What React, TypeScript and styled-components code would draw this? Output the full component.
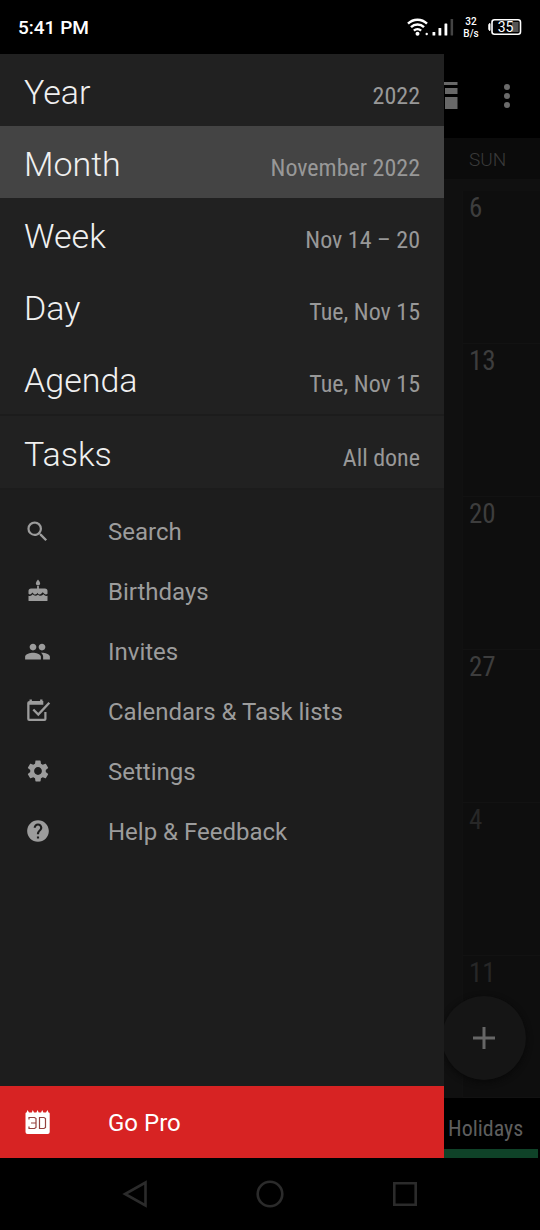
import React from "react";
import styled, { createGlobalStyle } from "styled-components";
import { MdSearch, MdGroup, MdSettings, MdHelp } from "react-icons/md";

const GlobalStyle = createGlobalStyle`
  *, *::before, *::after { box-sizing: border-box; }
  body {
    margin: 0;
    background: #000;
    font-family: Roboto, "Liberation Sans", sans-serif;
  }
  button {
    font: inherit;
    color: inherit;
    background: none;
    border: 0;
    padding: 0;
    cursor: pointer;
  }
`;

const condensed = `"Roboto Condensed", Roboto, "Liberation Sans", sans-serif`;

const Screen = styled.div`
  display: flex;
  flex-direction: column;
  min-height: 100vh;
`;

const StatusBar = styled.header`
  display: flex;
  align-items: center;
  justify-content: space-between;
  height: 54px;
  padding: 0 18px;
  color: #fff;
`;

const Clock = styled.time`
  padding-top: 2px;
  font-size: 19px;
  font-weight: 500;
  line-height: 24px;
`;

const StatusIcons = styled.div`
  display: flex;
  align-items: center;
`;

const NetSpeed = styled.div`
  display: flex;
  flex-direction: column;
  align-items: center;
  width: 18px;
  margin: 0 8px 0 7px;
  padding-top: 1px;
  font-size: 10px;
  font-weight: 500;
  line-height: 12px;
`;

const Main = styled.div`
  display: flex;
  flex: 1;
`;

const Drawer = styled.nav`
  display: flex;
  flex: 1;
  flex-direction: column;
  min-width: 0;
  background: #1d1d1d;
`;

const ViewGroup = styled.div`
  background: #212121;
  border-bottom: 2px solid #1c1c1c;
`;

const ViewRow = styled.button<{ $active?: boolean }>`
  display: flex;
  align-items: baseline;
  justify-content: space-between;
  width: 100%;
  height: 72px;
  padding: 0 24px;
  background: ${(p) => (p.$active ? "#444" : "transparent")};
`;

const ViewName = styled.span`
  color: #f0f0f0;
  font-size: 34px;
  font-weight: 300;
  line-height: 76px;
`;

const ViewDetail = styled.span`
  color: #989898;
  font-family: ${condensed};
  font-size: 24px;
  line-height: 28px;
`;

const ToolList = styled.div`
  flex: 1;
  padding: 11px 0;
`;

const ToolRow = styled.button<{ $accent?: boolean }>`
  display: flex;
  align-items: center;
  width: 100%;
  height: ${(p) => (p.$accent ? 72 : 60)}px;
  padding: 0 24px;
  background: ${(p) => (p.$accent ? "#d72323" : "transparent")};
  color: ${(p) => (p.$accent ? "#fff" : "#9c9c9c")};
  font-size: 24px;
  line-height: 28px;
`;

const ToolLabel = styled.span`
  padding-top: 2px;
`;

const IconSlot = styled.span`
  display: flex;
  justify-content: center;
  width: 27px;
  margin-right: 57px;
`;

const Backdrop = styled.main`
  position: relative;
  display: flex;
  flex: 0 0 96px;
  flex-direction: column;
  overflow: hidden;
  background: #0e0e0e;
`;

const Toolbar = styled.div`
  display: flex;
  align-items: center;
  justify-content: space-between;
  height: 84px;
  padding-right: 30px;
  background: #000;
`;

const IconButton = styled.button`
  display: flex;
`;

const Weekday = styled.div`
  height: 41px;
  padding-left: 25px;
  background: #0b0b0b;
  color: #3a3a3a;
  font-size: 19px;
  font-weight: 300;
  line-height: 43px;
`;

const Weeks = styled.div`
  display: flex;
  flex: 1;
  flex-direction: column;
  padding-top: 12px;
  background: #101010;
`;

const DayCell = styled.div<{ $outside?: boolean }>`
  flex: 0 0 153px;
  padding-left: 6px;
  margin-left: 18px;
  background: #0e0e0e;
  border-left: 1px solid #111;
  border-bottom: 1px solid #121212;
  color: ${(p) => (p.$outside ? "#272727" : "#3d3d3d")};
  font-family: ${condensed};
  font-size: 27px;
  line-height: 34px;

  &:last-child {
    flex: 1 0 auto;
  }
`;

const Fab = styled.button`
  position: absolute;
  right: 14px;
  bottom: 78px;
  display: flex;
  align-items: center;
  justify-content: center;
  width: 84px;
  height: 84px;
  border-radius: 50%;
  background: #151515;
  box-shadow: 0 2px 6px #080808;
`;

const TabStrip = styled.div`
  display: flex;
  flex-direction: column;
  background: #000;
`;

const CalendarTab = styled.button`
  height: 60px;
  margin-right: 2px;
  padding-left: 4px;
  border-bottom: 9px solid #0f4228;
  color: #5e5e5e;
  font-family: ${condensed};
  font-size: 22px;
  line-height: 28px;
  text-align: left;
`;

const TabLabel = styled.span`
  display: block;
  padding-top: 10px;
`;

const SystemBar = styled.footer`
  display: flex;
  justify-content: center;
  align-items: center;
  gap: 105px;
  height: 72px;
`;

const views = [
  { name: "Year", detail: "2022" },
  { name: "Month", detail: "November 2022", active: true },
  { name: "Week", detail: "Nov 14 – 20" },
  { name: "Day", detail: "Tue, Nov 15" },
  { name: "Agenda", detail: "Tue, Nov 15" },
];

const sundays = [
  { day: "6" },
  { day: "13" },
  { day: "20" },
  { day: "27" },
  { day: "4", outside: true },
  { day: "11", outside: true },
];

const SignalIcon = () => (
  <svg width="48" height="20" viewBox="0 0 48 20" fill="none" aria-hidden="true">
    <g stroke="#fff" strokeWidth="2.4">
      <path d="M1 6.6a13.5 13.5 0 0 1 19 0" />
      <path d="M4 10.2a9.2 9.2 0 0 1 13 0" />
      <path d="M6.9 13.6a5.2 5.2 0 0 1 7.2 0" />
    </g>
    <circle cx="10.5" cy="16.8" r="2" fill="#fff" />
    <circle cx="19.7" cy="17" r="1.2" fill="#fff" />
    <g fill="#fff">
      <rect x="25.5" y="15" width="2.8" height="3.5" rx=".6" />
      <rect x="31.5" y="11" width="2.8" height="7.5" rx=".6" />
      <rect x="37.5" y="6.5" width="2.8" height="12" rx=".6" />
    </g>
    <rect x="43.6" y="2" width="2.5" height="16.5" rx=".6" fill="#444" />
  </svg>
);

const BatteryIcon = () => (
  <svg width="34" height="18" viewBox="0 0 34 18" aria-label="Battery 35%">
    <path d="M2 5.5Q.8 5.5 .8 7v4Q.8 12.500 2 12.500z" fill="#fff" stroke="#fff" />
    <rect x="4" y="1.8" width="28.5" height="14.5" rx="2.5" fill="none" stroke="#fff" strokeWidth="1.6" />
    <rect x="24" y="4" width="6.500" height="10" fill="#555" />
    <text x="17.5" y="14" fill="#fff" fontSize="14" fontFamily="Roboto, sans-serif" textAnchor="middle">35</text>
  </svg>
);

const CakeIcon = () => (
  <svg width="26" height="26" viewBox="0 0 26 26" fill="currentColor" aria-hidden="true">
    <path d="M13 1.500c1.500 2 2.100 2.900 2.100 3.900a2.100 2.100 0 0 1-4.200 0c0-1 .6-1.900 2.100-3.900z" />
    <path d="M12.100 8h1.800v2.400h6q2.600 0 2.600 2.600v2.800q-1.600 1.400-3.200 0l-1.600-1.500-1.500 1.500q-1.600 1.300-3.200-.1L13 14.800l-1.500 1.300q-1.400 1-2.800-.2L7.600 14.600l-1.300 1.200q-1.400 1.300-2.800 0V13q0-2.600 2.600-2.600h6z" />
    <path d="M3.500 17.800q1.900.6 3.500-.8l.7-.7.8.7q2 1.500 4 .1l.5-.5.7.6q2 1.300 3.900-.1l.8-.8.8.8q1.500 1.200 3.300.700V22.500q0 .6-.7.6H4.200q-.7 0-.7-.6z" />
  </svg>
);

const CalendarCheckIcon = () => (
  <svg width="26" height="26" viewBox="0 0 26 26" fill="none" aria-hidden="true">
    <path d="M4.5 3V1.5h2.4V3h8.2V1.5h2.4V3h.8v3.8H4.5v14h14.8V14h2.2v7q0 2-2 2H4.2q-2 0-2-2V5q0-2 2.3-2z" fill="currentColor" />
    <path d="M8.3 11.5l5 5L24.3 4.8" stroke="currentColor" strokeWidth="2.4" />
  </svg>
);

const ProIcon = () => (
  <svg width="27" height="27" viewBox="0 0 27 27" fill="none" aria-hidden="true">
    <path d="M1.500 23V4.500Q1.500 3.500 2.500 3.500L3.500 1 5 3.500h2.800L8.800 1 10 3.500h2.400L13.500 1l1.200 2.500h2.400L18.200 1l1.200 2.500h2.600L23.500 1l1 2.500q1.200 0 1.200 1V23q0 2-2 2H3.500q-2 0-2-2z" fill="#fff" />
    <path d="M5 10.500V8.500h5.500l1.500 1v9l-1.500 1H5v-2M7 14h4.500M15.500 8.500h4.500l1.500 1v9l-1.500 1h-4.500z" stroke="#94403d" strokeWidth="1.200" />
  </svg>
);

const MonthViewIcon = () => (
  <svg width="14" height="29" viewBox="0 0 14 29" fill="#686868" aria-hidden="true">
    <path d="M0 0h13.5v3H0zM1 6h12.5v6H1zM1 15h12.5v12H1z" />
  </svg>
);

const MoreIcon = () => (
  <svg width="6" height="26" viewBox="0 0 6 26" fill="#6b6b6b" aria-hidden="true">
    <circle cx="3" cy="4" r="3" />
    <circle cx="3" cy="13" r="3" />
    <circle cx="3" cy="22" r="3" />
  </svg>
);

const tools = [
  { label: "Search", icon: <MdSearch size={27} /> },
  { label: "Birthdays", icon: <CakeIcon /> },
  { label: "Invites", icon: <MdGroup size={27} /> },
  { label: "Calendars & Task lists", icon: <CalendarCheckIcon /> },
  { label: "Settings", icon: <MdSettings size={26} /> },
  { label: "Help & Feedback", icon: <MdHelp size={26} /> },
];

export default function App() {
  return (
    <Screen>
      <GlobalStyle />
      <StatusBar>
        <Clock>5:41 PM</Clock>
        <StatusIcons>
          <SignalIcon />
          <NetSpeed>
            <span>32</span>
            <span>B/s</span>
          </NetSpeed>
          <BatteryIcon />
        </StatusIcons>
      </StatusBar>

      <Main>
        <Drawer>
          <ViewGroup>
            {views.map((v) => (
              <ViewRow key={v.name} $active={v.active}>
                <ViewName>{v.name}</ViewName>
                <ViewDetail>{v.detail}</ViewDetail>
              </ViewRow>
            ))}
          </ViewGroup>
          <ViewGroup>
            <ViewRow>
              <ViewName>Tasks</ViewName>
              <ViewDetail>All done</ViewDetail>
            </ViewRow>
          </ViewGroup>
          <ToolList>
            {tools.map((t) => (
              <ToolRow key={t.label}>
                <IconSlot>{t.icon}</IconSlot>
                <ToolLabel>{t.label}</ToolLabel>
              </ToolRow>
            ))}
          </ToolList>
          <ToolRow $accent>
            <IconSlot>
              <ProIcon />
            </IconSlot>
            <ToolLabel>Go Pro</ToolLabel>
          </ToolRow>
        </Drawer>

        <Backdrop>
          <Toolbar>
            <IconButton aria-label="Month layout">
              <MonthViewIcon />
            </IconButton>
            <IconButton aria-label="More options">
              <MoreIcon />
            </IconButton>
          </Toolbar>
          <Weekday>SUN</Weekday>
          <Weeks>
            {sundays.map((s) => (
              <DayCell key={s.day} $outside={s.outside}>
                {s.day}
              </DayCell>
            ))}
          </Weeks>
          <TabStrip>
            <CalendarTab>
              <TabLabel>Holidays</TabLabel>
            </CalendarTab>
          </TabStrip>
          <Fab aria-label="Add event">
            <svg width="22" height="22" viewBox="0 0 22 22" aria-hidden="true">
              <path d="M11 0v22M0 11h22" stroke="#666" strokeWidth="3" />
            </svg>
          </Fab>
        </Backdrop>
      </Main>

      <SystemBar>
        <IconButton aria-label="Back">
          <svg width="30" height="30" viewBox="0 0 30 30" fill="none" stroke="#2b2b2b" strokeWidth="2.6">
            <path d="M25.5 3.5v23L5 15z" />
          </svg>
        </IconButton>
        <IconButton aria-label="Home">
          <svg width="30" height="30" viewBox="0 0 30 30" fill="none" stroke="#2b2b2b" strokeWidth="2.6">
            <circle cx="15" cy="15" r="12.3" />
          </svg>
        </IconButton>
        <IconButton aria-label="Recent apps">
          <svg width="30" height="30" viewBox="0 0 30 30" fill="none" stroke="#2b2b2b" strokeWidth="2.6">
            <path d="M4.3 4.3h21.4v21.4H4.3z" />
          </svg>
        </IconButton>
      </SystemBar>
    </Screen>
  );
}
